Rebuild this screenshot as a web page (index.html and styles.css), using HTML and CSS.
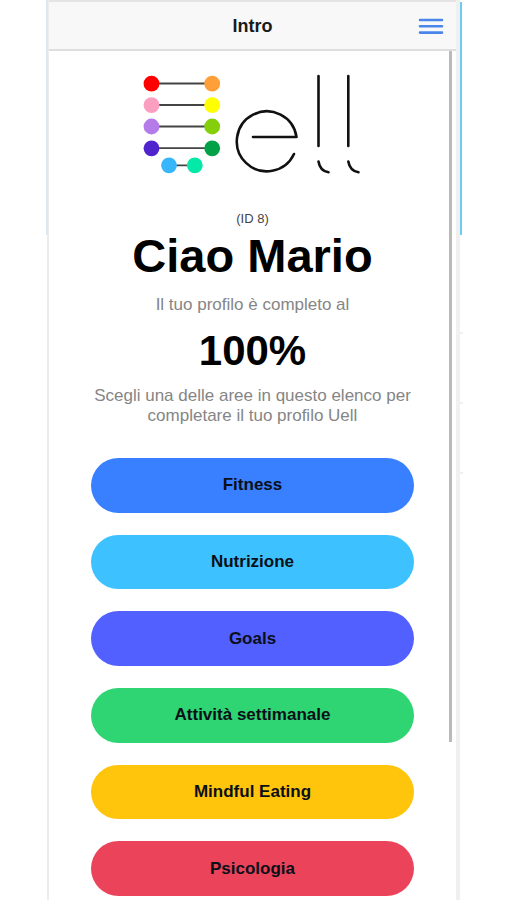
FILE: index.html
```html
<!DOCTYPE html>
<html lang="it">
<head>
<meta charset="utf-8">
<meta name="viewport" content="width=device-width, initial-scale=1">
<title>Intro</title>
<link rel="stylesheet" href="styles.css">
</head>
<body>
<div class="phone">
  <header class="bar">
    <h1 class="bar-title">Intro</h1>
    <button class="menu" type="button" aria-label="Menu">
      <svg width="26" height="18" viewBox="0 0 26 18" aria-hidden="true">
        <path d="M2 3H24M2 9.300H24M2 15.600H24" stroke="#4a86ea" stroke-width="2.6" stroke-linecap="round"/>
      </svg>
    </button>
  </header>
  <main class="content">
    <svg class="logo" width="220" height="104" viewBox="143 72 220 104" fill="none" role="img" aria-label="Uell">
      <g stroke="#444" stroke-width="1.8">
        <path d="M151 83.500H212M151 105H212M151 126.500H212M151 148.200H212M169 165.300H195"/>
      </g>
      <circle cx="151.500" cy="83.700" r="7.900" fill="#ff0000"/>
      <circle cx="212.200" cy="83.700" r="7.900" fill="#ff9f38"/>
      <circle cx="151.500" cy="105.200" r="7.900" fill="#fa9fc0"/>
      <circle cx="212.200" cy="105.200" r="7.900" fill="#ffff00"/>
      <circle cx="151.500" cy="126.500" r="7.900" fill="#b57be9"/>
      <circle cx="212.200" cy="126.500" r="7.900" fill="#84ce0a"/>
      <circle cx="151.500" cy="148.300" r="7.900" fill="#5023cc"/>
      <circle cx="212.200" cy="148.300" r="7.900" fill="#02a047"/>
      <circle cx="169" cy="165.300" r="7.900" fill="#38b6fb"/>
      <circle cx="194.800" cy="165.300" r="7.900" fill="#04e9a7"/>
      <g stroke="#111" stroke-width="2.6" stroke-linecap="round" stroke-linejoin="round">
        <path d="M253 137H296.500A30 30 0 1 0 294 154"/>
        <path d="M318.500 76V146M348.300 76V146"/>
        <path d="M318.500 161.500Q320 171 328.500 172.300M348.300 161.500Q350 171 358.500 172.300"/>
      </g>
    </svg>
    <p class="user-id">(ID 8)</p>
    <h2 class="greeting">Ciao Mario</h2>
    <p class="note">Il tuo profilo è completo al</p>
    <p class="percent">100%</p>
    <p class="note">Scegli una delle aree in questo elenco per completare il tuo profilo Uell</p>
    <nav class="areas" aria-label="Aree">
      <button type="button" class="area fitness">Fitness</button>
      <button type="button" class="area nutrition">Nutrizione</button>
      <button type="button" class="area goals">Goals</button>
      <button type="button" class="area activity">Attività settimanale</button>
      <button type="button" class="area eating">Mindful Eating</button>
      <button type="button" class="area psychology">Psicologia</button>
    </nav>
    <span class="scrollbar"></span>
  </main>
  <span class="edge edge-left"></span>
  <span class="edge edge-right"></span>
  <div class="ticks"><span></span><span></span><span></span></div>
</div>
</body>
</html>
```
FILE: styles.css
```css
* {
  box-sizing: border-box;
}

body {
  margin: 0;
  background: #fff;
  color: #000;
  font-family: "Liberation Sans", Arial, sans-serif;
}

h1, h2, p {
  margin: 0;
}

button {
  border: 0;
  font: inherit;
  color: inherit;
  cursor: pointer;
}

.phone {
  position: relative;
  min-height: 100vh;
  margin-inline: max(47px, calc(50% - 240px));
  border-left: 2px solid #ececec;
  border-right: 4px solid #f0f0f0;
}

.bar {
  display: grid;
  grid-template-columns: 40px 1fr 40px;
  align-items: center;
  height: 51px;
  padding: 0 12px;
  background: #f8f8f8;
  border-top: 2px solid #e4e4e4;
  border-bottom: 2px solid #dedede;
}

.bar-title {
  grid-column: 2;
  font-size: 18px;
  line-height: 20px;
  text-align: center;
  color: #1a1a1a;
}

.menu {
  display: flex;
  justify-content: flex-end;
  padding: 0;
  background: none;
}

.content {
  position: relative;
  display: flex;
  flex-direction: column;
  align-items: center;
  padding: 21px 42px 3px;
  text-align: center;
}

.logo {
  display: block;
  max-width: 100%;
}

.user-id {
  margin-top: 35px;
  font-size: 13px;
  line-height: 16px;
  color: #444;
}

.greeting {
  margin-top: 3px;
  font-size: 47px;
  line-height: 52px;
}

.note {
  margin-top: 13px;
  font-size: 17px;
  line-height: 20px;
  color: #858585;
}

.percent {
  margin-top: 12px;
  font-size: 42px;
  font-weight: bold;
  line-height: 48px;
}

.percent + .note {
  margin-top: 11px;
}

.areas {
  display: grid;
  grid-auto-rows: 1fr;
  gap: 22px;
  width: 100%;
  height: 438px;
  margin-top: 32px;
}

.area {
  border-radius: 28px;
  font-size: 17px;
  font-weight: bold;
  color: #0b0f18;
}

.fitness { background: #3880ff; }
.nutrition { background: #3dc2ff; }
.goals { background: #5260ff; }
.activity { background: #2fd573; }
.eating { background: #fec50c; }
.psychology { background: #eb445a; }

.scrollbar {
  position: absolute;
  top: 0;
  right: 4px;
  width: 3px;
  height: 691px;
  background: #bababa;
}

.edge {
  position: absolute;
  top: 0;
  width: 2px;
  height: 235px;
}

.edge-left {
  left: -3px;
  background: #dce8f2;
}

.edge-right {
  top: 2px;
  right: -6px;
  height: 233px;
  background: #6bcbf0;
}

.ticks {
  position: absolute;
  top: 332px;
  right: -7px;
  display: grid;
  gap: 68px;
}

.ticks span {
  width: 3px;
  height: 2px;
  background: #f0f0f0;
}
```
